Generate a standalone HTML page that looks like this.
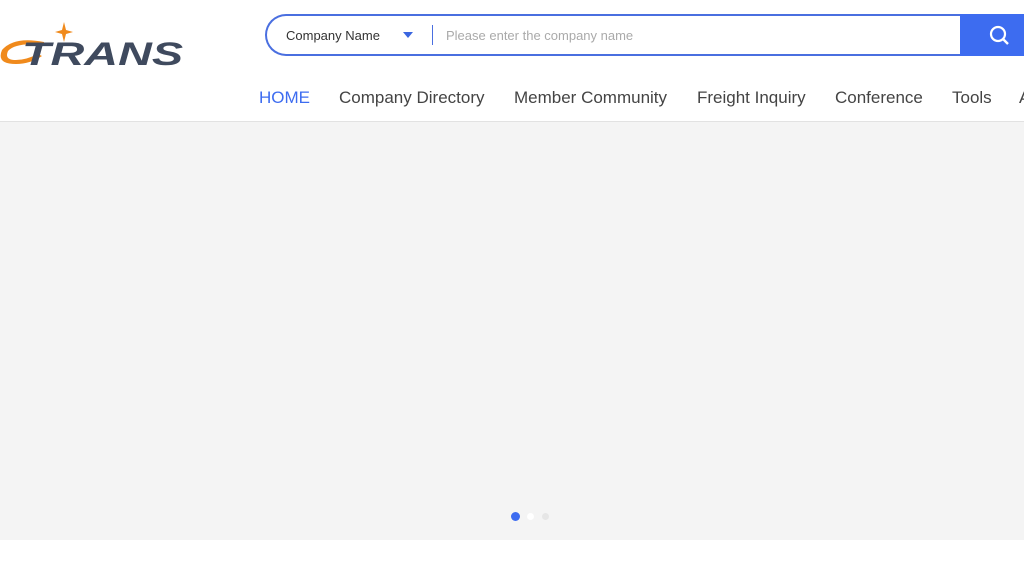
<!DOCTYPE html>
<html><head><style>
body{margin:0;width:1024px;height:576px;overflow:hidden;background:#fff;font-family:"Liberation Sans",sans-serif;position:relative}
.abs{position:absolute}
.nav span{position:absolute;top:88px;font-size:17px;color:#444;white-space:nowrap}
</style></head><body>
<svg class="abs" style="left:0;top:18px" width="190" height="55">
<path d="M44 24 Q14 18 2 32 Q-4 46 16 46 Q30 46 42 38 L38 36 Q26 42 16 42 Q4 42 8 33 Q16 24 44 27 Z" fill="#f08a1c"/>
<path d="M64 4 L66 12 L73 14 L66 16 L64 24 L62 16 L55 14 L62 12 Z" fill="#f08a1c"/>
<text x="22" y="47" font-family="Liberation Sans" font-weight="bold" font-style="italic" font-size="32" fill="#3f4a5e" textLength="161" lengthAdjust="spacingAndGlyphs">TRANS</text>
</svg>
<div class="abs" style="left:265px;top:14px;width:720px;height:42px;border:2px solid #4a6fe0;border-radius:22px 0 0 22px;box-sizing:border-box;border-right:none"></div>
<div class="abs" style="left:286px;top:28px;font-size:13px;color:#333">Company Name</div>
<div class="abs" style="left:403px;top:32px;width:0;height:0;border-left:5px solid transparent;border-right:5px solid transparent;border-top:6px solid #3a66e0"></div>
<div class="abs" style="left:432px;top:25px;width:1px;height:20px;background:#4a6fe0"></div>
<div class="abs" style="left:446px;top:28px;font-size:13px;color:#aaa">Please enter the company name</div>
<div class="abs" style="left:960px;top:14px;width:64px;height:42px;background:#3d6cf0"></div>
<svg class="abs" style="left:988px;top:24px" width="22" height="22"><circle cx="10" cy="10" r="7" fill="none" stroke="#fff" stroke-width="2.2"/><path d="M15 15 L20 20" stroke="#fff" stroke-width="2.4"/></svg>
<div class="nav">
<span style="left:259px;color:#3d6cf0">HOME</span>
<span style="left:339px">Company Directory</span>
<span style="left:514px">Member Community</span>
<span style="left:697px">Freight Inquiry</span>
<span style="left:835px">Conference</span>
<span style="left:952px">Tools</span>
<span style="left:1019px">A</span>
</div>
<div class="abs" style="left:0;top:121px;width:1024px;height:1px;background:#e2e2e2"></div>
<div class="abs" style="left:0;top:122px;width:1024px;height:418px;background:#f4f4f4"></div>
<div class="abs" style="left:511px;top:512px;width:9px;height:9px;border-radius:50%;background:#3d6cf0"></div>
<div class="abs" style="left:527px;top:513px;width:7px;height:7px;border-radius:50%;background:#fff"></div>
<div class="abs" style="left:542px;top:513px;width:7px;height:7px;border-radius:50%;background:#e6e6e6"></div>
</body></html>
